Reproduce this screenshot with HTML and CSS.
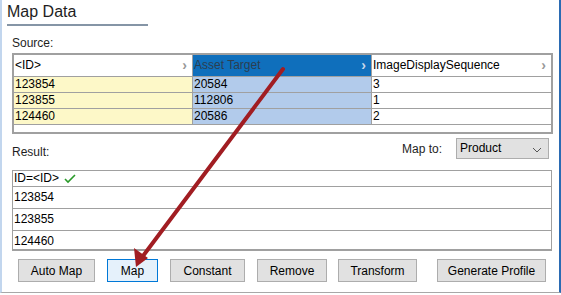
FILE: index.html
```html
<!DOCTYPE html>
<html>
<head>
<meta charset="utf-8">
<link rel="stylesheet" href="styles.css">
</head>
<body>
<div class="frame">
  <div class="title">Map Data</div>
  <div class="label">Source:</div>
  <div class="grid">
    <div class="row head">
      <div class="cell c1">&lt;ID&gt;<span class="chev">›</span></div>
      <div class="cell c2 sel">Asset Target<span class="chev">›</span></div>
      <div class="cell c3">ImageDisplaySequence<span class="chev">›</span></div>
    </div>
    <div class="row">
      <div class="cell c1 y">123854</div><div class="cell c2 b">20584</div><div class="cell c3">3</div>
    </div>
    <div class="row">
      <div class="cell c1 y">123855</div><div class="cell c2 b">112806</div><div class="cell c3">1</div>
    </div>
    <div class="row">
      <div class="cell c1 y">124460</div><div class="cell c2 b">20586</div><div class="cell c3">2</div>
    </div>
  </div>
  <div class="resbar">
    <div class="label">Result:</div>
    <div class="mapto">
      <span>Map to:</span>
      <div class="select">Product<svg width="10" height="6" viewBox="0 0 10 6"><path d="M1 1 L5 5 L9 1" fill="none" stroke="#555" stroke-width="1"/></svg></div>
    </div>
  </div>
  <div class="result">
    <div class="rrow first">ID=&lt;ID&gt; <svg class="check" width="12" height="10" viewBox="0 0 12 10"><path d="M1 5 L4 8 L11 1" fill="none" stroke="#2a9a2a" stroke-width="1.6"/></svg></div>
    <div class="rrow">123854</div>
    <div class="rrow">123855</div>
    <div class="rrow">124460</div>
  </div>
  <div class="buttons">
    <button class="btn w76">Auto Map</button>
    <button class="btn w50 active">Map</button>
    <button class="btn w74">Constant</button>
    <button class="btn w69">Remove</button>
    <button class="btn w78">Transform</button>
    <button class="btn w108">Generate Profile</button>
  </div>
  <svg class="arrow" width="561" height="295" viewBox="0 0 561 295">
    <line x1="283" y1="69" x2="143" y2="256" stroke="#a11d22" stroke-width="4" stroke-linecap="round"/>
    <polygon points="136,267 134,248 148,258" fill="#a11d22"/>
  </svg>
</div>
</body>
</html>
```
FILE: styles.css
```css
* { box-sizing: border-box; }
html, body { margin: 0; padding: 0; background: #fff; }
body {
  width: 561px; height: 295px; overflow: hidden;
  font-family: "Liberation Sans", Arial, sans-serif;
  font-size: 12px; color: #000;
}
.frame {
  position: relative;
  width: 561px; height: 293px;
  border-left: 2px solid #c2d6ee;
  border-right: 2px solid #2b6bb3;
  border-bottom: 1px solid #a8a8a8;
  padding: 0 8px 0 10px;
}
.title {
  font-size: 16px; color: #1e1e1e;
  margin-left: -5px;
  width: 141px;
  padding-top: 3px;
  height: 26px;
  border-bottom: 2px solid #8595a6;
}
.label { padding: 10px 0 0 0; height: 27px; color: #1e1e1e; }
.grid {
  width: 541px; height: 81px;
  border: 2px solid #a0a0a0;
}
.row { display: flex; height: 16px; border-bottom: 1px solid #a0a0a0; }
.row.head { height: 22px; }
.cell {
  height: 100%; line-height: 15px; padding-left: 1px;
  border-right: 1px solid #a0a0a0; white-space: nowrap;
  position: relative;
}
.head .cell { line-height: 20px; }
.c1 { width: 179px; }
.c2 { width: 179px; }
.c3 { flex: 1; border-right: none; }
.sel { background: #0f6fbc; color: #2c3e50; }
.y { background: #fdf8c8; }
.b { background: #b2cbeb; }
.chev { position: absolute; right: 5px; top: 0; color: #999; font-size: 14px; font-weight: bold; }
.sel .chev { color: #c8d8ea; }
.resbar { display: flex; justify-content: space-between; align-items: flex-start; height: 36px; }
.resbar .label { padding-top: 11px; }
.mapto { display: flex; align-items: center; padding: 4px 2px 0 0; }
.mapto span { margin-right: 14px; color: #1e1e1e; }
.select {
  width: 93px; height: 21px; border: 1px solid #adadad; background: #e1e1e1;
  display: flex; justify-content: space-between; align-items: center;
  padding: 0 6px 1px 3px; color: #000;
}
.select svg { margin-top: 3px; }
.result {
  width: 540px; height: 81px;
  border: 1px solid #a0a0a0; border-bottom: 2px solid #a0a0a0;
}
.rrow { height: 22px; line-height: 21px; padding-left: 1px; border-bottom: 1px solid #a0a0a0; }
.rrow.first { height: 16px; line-height: 15px; }
.rrow:last-child { border-bottom: none; }
.check { vertical-align: middle; margin-left: 2px; }
.buttons { display: flex; margin-top: 8px; padding-left: 6px; }
.btn {
  font-family: inherit; font-size: 12px; color: #000;
  height: 23px; background: #e1e1e1; border: 1px solid #adadad;
  margin: 0; padding: 0; flex: 0 0 auto;
}
.btn.active { background: #e5f1fb; border-color: #0078d7; }
.w76 { width: 77px; margin-right: 12px; }
.w50 { width: 51px; margin-right: 12px; }
.w74 { width: 75px; margin-right: 12px; }
.w69 { width: 70px; margin-right: 11px; }
.w78 { width: 79px; margin-right: 20px; }
.w108 { width: 109px; }
.arrow { position: absolute; left: -2px; top: 0; pointer-events: none; }
```
